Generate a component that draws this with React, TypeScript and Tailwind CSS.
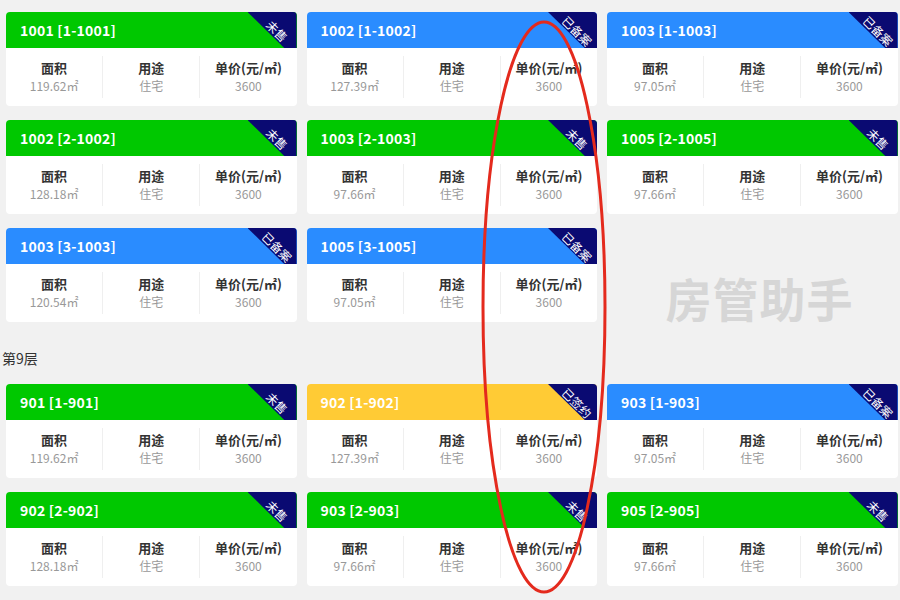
import React from 'react';

type Status = '未售' | '已备案' | '已签约';

type Room = {
    title: string;
    area: string;
    status: Status;
};

const headerColor: Record<Status, string> = {
    未售: 'bg-[#00c800]',
    已备案: 'bg-[#2a8cff]',
    已签约: 'bg-[#ffcb35]',
};

const floors: { label?: string; rows: Room[][] }[] = [
    {
        rows: [
            [
                { title: '1001 [1-1001]', area: '119.62㎡', status: '未售' },
                { title: '1002 [1-1002]', area: '127.39㎡', status: '已备案' },
                { title: '1003 [1-1003]', area: '97.05㎡', status: '已备案' },
            ],
            [
                { title: '1002 [2-1002]', area: '128.18㎡', status: '未售' },
                { title: '1003 [2-1003]', area: '97.66㎡', status: '未售' },
                { title: '1005 [2-1005]', area: '97.66㎡', status: '未售' },
            ],
            [
                { title: '1003 [3-1003]', area: '120.54㎡', status: '已备案' },
                { title: '1005 [3-1005]', area: '97.05㎡', status: '已备案' },
            ],
        ],
    },
    {
        label: '第9层',
        rows: [
            [
                { title: '901 [1-901]', area: '119.62㎡', status: '未售' },
                { title: '902 [1-902]', area: '127.39㎡', status: '已签约' },
                { title: '903 [1-903]', area: '97.05㎡', status: '已备案' },
            ],
            [
                { title: '902 [2-902]', area: '128.18㎡', status: '未售' },
                { title: '903 [2-903]', area: '97.66㎡', status: '未售' },
                { title: '905 [2-905]', area: '97.66㎡', status: '未售' },
            ],
        ],
    },
];

const Stat = ({ label, value, divider }: { label: string; value: string; divider?: boolean }) => (
    <div className={`flex-1 flex flex-col items-center justify-center ${divider ? 'border-l border-[#efefef]' : ''}`}>
        <span className="text-[13px] leading-[18px] font-bold text-[#333]">{label}</span>
        <span className="text-[12px] leading-[18px] text-[#999]">{value}</span>
    </div>
);

const RoomCard = ({ room }: { room: Room }) => (
    <div className="w-[290.5px] h-[94px] bg-white rounded-[4px] overflow-hidden flex flex-col">
        <div className={`relative h-[36px] shrink-0 flex items-center pl-[14px] ${headerColor[room.status]}`}>
            <span className="text-[14px] font-bold text-white tracking-[0.2px]">{room.title}</span>
            <div className="absolute top-0 right-0 w-[49px] h-full bg-[#0a0a72] [clip-path:polygon(0_0,100%_0,100%_100%,75%_100%)]">
                <span className="absolute top-[12px] left-[6px] w-[46px] text-center rotate-45 text-[12px] leading-[14px] text-white">
                    {room.status}
                </span>
            </div>
        </div>
        <div className="flex-1 flex py-[8px]">
            <Stat label="面积" value={room.area} />
            <Stat label="用途" value="住宅" divider />
            <Stat label="单价(元/㎡)" value="3600" divider />
        </div>
    </div>
);

export default function App() {
    return (
        <div className="relative w-[900px] h-[600px] overflow-hidden bg-[#f1f1f1] font-['Noto_Sans_CJK_SC','Noto_Sans',sans-serif]">
            <div className="pt-[12px] pl-[6px]">
                {floors.map((floor, fi) => (
                    <div key={fi}>
                        {floor.label && (
                            <div className="-ml-[4px] h-[62px] pt-[26px] text-[14px] leading-[20px] text-[#333]">{floor.label}</div>
                        )}
                        <div className="flex flex-col gap-[14px]">
                            {floor.rows.map((row, ri) => (
                                <div key={ri} className="flex gap-[10px]">
                                    {row.map((room) => (
                                        <RoomCard key={room.title} room={room} />
                                    ))}
                                    {row.length < 3 && (
                                        <div className="w-[291px] flex items-end justify-center pb-[2px]">
                                            <span className="text-[46px] leading-none font-bold text-[#d6d6d6] tracking-[1px] ml-[14px]">
                                                房管助手
                                            </span>
                                        </div>
                                    )}
                                </div>
                            ))}
                        </div>
                    </div>
                ))}
            </div>
            {/* hand-drawn highlight */}
            <svg className="absolute inset-0 pointer-events-none" width="900" height="600">
                <ellipse cx="544" cy="307" rx="61" ry="285" fill="none" stroke="#e42a1d" strokeWidth="3" />
            </svg>
        </div>
    );
}
